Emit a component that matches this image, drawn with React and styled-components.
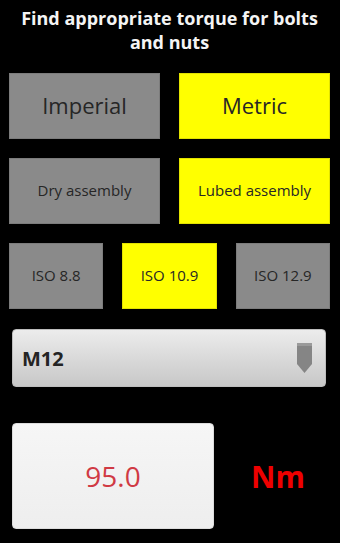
import styled, { createGlobalStyle } from 'styled-components';

const GlobalStyle = createGlobalStyle`
  html, body {
    margin: 0;
    padding: 0;
    background: #000;
  }
  body {
    font-family: 'Open Sans', 'DejaVu Sans', sans-serif;
  }
`;

const Screen = styled.div`
  width: 340px;
  height: 543px;
  background: #000;
  box-sizing: border-box;
  padding: 6px 10px 0 9px;
  display: flex;
  flex-direction: column;
  overflow: hidden;
`;

const Title = styled.h1`
  margin: 0;
  color: #f4f4f4;
  font-size: 18px;
  font-weight: 700;
  line-height: 24px;
  text-align: center;
  white-space: nowrap;
`;

const ButtonRow = styled.div`
  display: grid;
  grid-template-columns: repeat(${(p) => p.$cols}, 1fr);
  column-gap: 19px;
  margin-top: 19px;
`;

const Choice = styled.div`
  height: 66px;
  box-sizing: border-box;
  display: flex;
  align-items: center;
  justify-content: center;
  padding-bottom: 2px;
  background: ${(p) => (p.$active ? '#ffff00' : '#8a8a8a')};
  border: 1px solid ${(p) => (p.$active ? '#e2e200' : '#7c7c7c')};
  color: #262626;
  font-size: ${(p) => p.$size}px;
  white-space: nowrap;
`;

const Spinner = styled.div`
  margin: 20px 4px 0 3px;
  height: 58px;
  box-sizing: border-box;
  border-radius: 4px;
  background: linear-gradient(#ececec, #d6d6d6 60%, #c8c8c8);
  border: 1px solid #bdbdbd;
  display: flex;
  align-items: center;
  justify-content: space-between;
  padding: 0 12px 0 9px;
`;

const SpinnerText = styled.span`
  color: #242424;
  font-size: 20px;
  font-weight: 700;
`;

const ResultRow = styled.div`
  margin: 36px 0 0 3px;
  display: flex;
  align-items: center;
`;

const ResultBox = styled.div`
  width: 202px;
  height: 106px;
  box-sizing: border-box;
  border-radius: 4px;
  background: linear-gradient(#f6f6f6, #eeeeee);
  border: 1px solid #dcdcdc;
  display: flex;
  align-items: center;
  justify-content: center;
  color: #d03a44;
  font-size: 28px;
`;

const Unit = styled.span`
  flex: 1;
  text-align: center;
  color: #ee0000;
  font-size: 30px;
  font-weight: 700;
  padding-left: 12px;
`;

const DropArrow = () => (
  <svg width="17" height="32" viewBox="0 0 17 32">
    <path d="M1 1 H16 V22 L8.5 31 L1 22 Z" fill="#858585" />
    <path d="M1 1 H16 V4 H1 Z" fill="#9a9a9a" />
  </svg>
);

export default function App() {
  return (
    <>
      <GlobalStyle />
      <Screen>
        <Title>
          Find appropriate torque for bolts
          <br />
          and nuts
        </Title>
        <ButtonRow $cols={2}>
          <Choice $size={22}>Imperial</Choice>
          <Choice $size={22} $active>
            Metric
          </Choice>
        </ButtonRow>
        <ButtonRow $cols={2}>
          <Choice $size={15}>Dry assembly</Choice>
          <Choice $size={15} $active>
            Lubed assembly
          </Choice>
        </ButtonRow>
        <ButtonRow $cols={3}>
          <Choice $size={15}>ISO 8.8</Choice>
          <Choice $size={15} $active>
            ISO 10.9
          </Choice>
          <Choice $size={15}>ISO 12.9</Choice>
        </ButtonRow>
        <Spinner>
          <SpinnerText>M12</SpinnerText>
          <DropArrow />
        </Spinner>
        <ResultRow>
          <ResultBox>95.0</ResultBox>
          <Unit>Nm</Unit>
        </ResultRow>
      </Screen>
    </>
  );
}
